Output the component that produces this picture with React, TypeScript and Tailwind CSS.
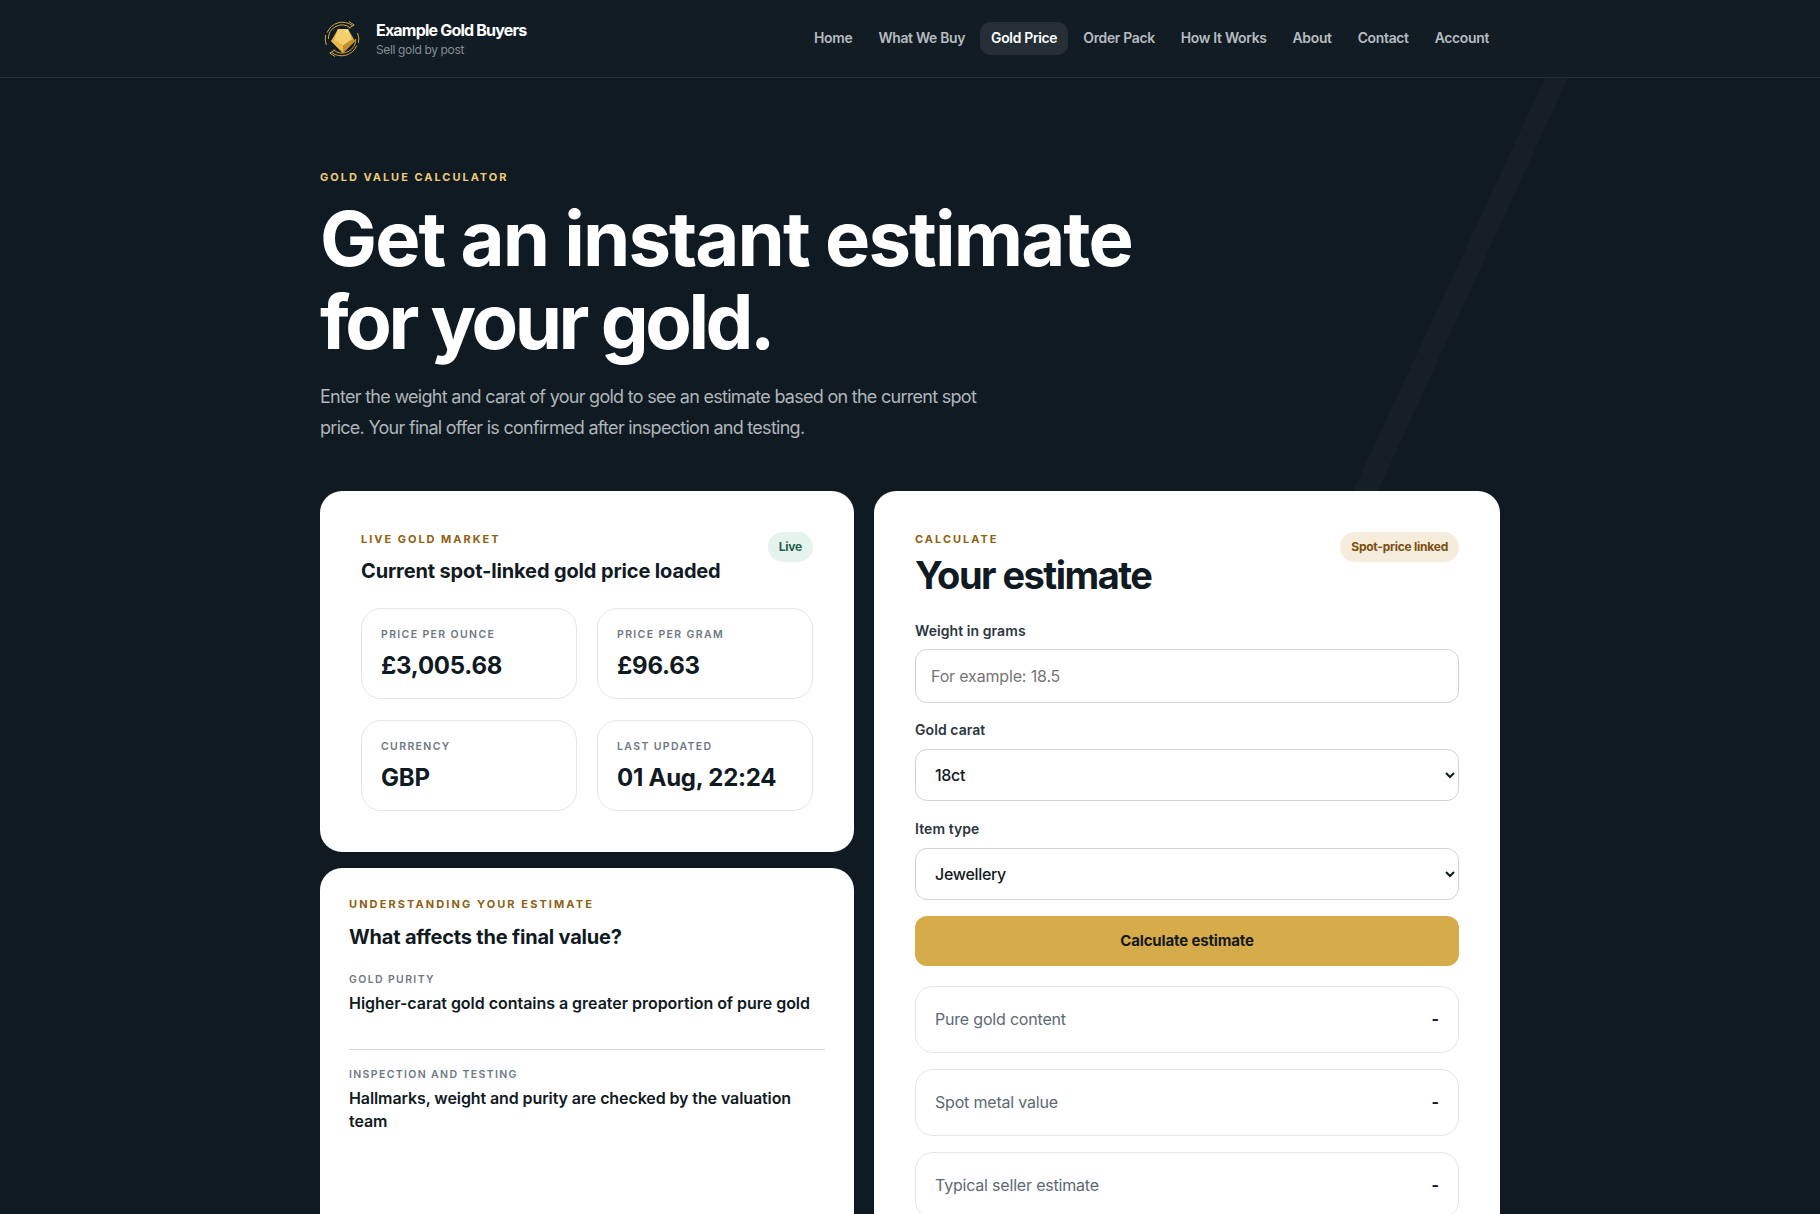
import { Fragment } from "react";

const navLinks = ["Home", "What We Buy", "Gold Price", "Order Pack", "How It Works", "About", "Contact", "Account"];

const marketTiles = [
  { label: "PRICE PER OUNCE", value: "£3,005.68" },
  { label: "PRICE PER GRAM", value: "£96.63" },
  { label: "CURRENCY", value: "GBP" },
  { label: "LAST UPDATED", value: "01 Aug, 22:24" },
];

const results = ["Pure gold content", "Spot metal value", "Typical seller estimate"];

const Logo = () => (
  <svg width="40" height="40" viewBox="0 0 40 40" fill="none" className="shrink-0">
    <path d="M5.2 13.5A16.5 16.5 0 0 1 30.5 6.6" stroke="#d3a63f" strokeWidth="1" />
    <path d="M34.8 26.5A16.5 16.5 0 0 1 9.5 33.4" stroke="#d3a63f" strokeWidth="1" />
    <path d="M35.6 14A17 17 0 0 1 36.4 24" stroke="#d3a63f" strokeWidth="1" />
    <path d="M4.4 26A17 17 0 0 1 3.6 16" stroke="#d3a63f" strokeWidth="1" />
    <path d="M6.4 20A13.6 13.6 0 0 1 28.5 9" stroke="#d3a63f" strokeWidth="1" />
    <path d="M33.6 20A13.6 13.6 0 0 1 11.5 31" stroke="#d3a63f" strokeWidth="1" />
    <path d="M27 2.5 32.2 6 26.8 9.2" stroke="#d3a63f" strokeWidth="1" />
    <path d="M13 37.5 7.8 34 13.2 30.8" stroke="#d3a63f" strokeWidth="1" />
    <path d="M16 10 26 10 33 22 21 34 9 22Z" fill="#d9a63c" />
    <path d="M16 10 26 10 30 20.5 21 26.5 12 20.5Z" fill="#f2cf6a" />
    <path d="M9 22 12 20.5 21 26.5 21 34Z" fill="#e8b94a" />
    <path d="M33 22 30 20.5 21 26.5 21 34Z" fill="#c28f2d" />
    <circle cx="24.5" cy="12.5" r="1" fill="#fff8dc" />
  </svg>
);

const Header = () => (
  <header className="h-[78px] border-b border-[#252f38] bg-[#111c24]">
    <div className="mx-auto flex h-full w-[1180px] items-center justify-between">
      <div className="flex items-center gap-3.5 pl-[2px]">
        <Logo />
        <div className="-mt-px">
          <div className="text-base leading-[22px] font-bold tracking-[-0.05em] text-white">Example Gold Buyers</div>
          <div className="mt-px text-xs leading-[16px] tracking-[-0.03em] text-[#858d94]">Sell gold by post</div>
        </div>
      </div>
      <nav className="flex items-center gap-1">
        {navLinks.map((link) => (
          <a
            key={link}
            className={
              link === "Gold Price"
                ? "rounded-[10px] bg-[#262f38] px-[11px] py-[7px] text-[13.9px] leading-[19px] font-semibold tracking-[-0.022em] text-white"
                : "rounded-[10px] px-[11px] py-[7px] text-[13.9px] leading-[19px] font-semibold tracking-[-0.022em] text-[#b8bcc0]"
            }
          >
            {link}
          </a>
        ))}
      </nav>
    </div>
  </header>
);

const Badge = ({ label, className }: { label: string; className: string }) => (
  <span className={`flex h-[30px] items-center rounded-full px-[11px] text-xs font-bold tracking-[-0.02em] ${className}`}>
    {label}
  </span>
);

const MarketCard = () => (
  <section className="rounded-[22px] bg-white p-[41px]">
    <div className="flex items-start justify-between">
      <div>
        <div className="text-[11px] leading-[14px] font-bold tracking-[0.18em] text-[#8f5f12]">LIVE GOLD MARKET</div>
        <h2 className="mt-[12px] text-xl leading-[26px] font-bold tracking-[-0.007em] text-[#101a22]">
          Current spot-linked gold price loaded
        </h2>
      </div>
      <Badge label="Live" className="bg-[#e6f3ec] text-[#24614a]" />
    </div>
    <div className="mt-[24px] grid grid-cols-2 gap-x-5 gap-y-[21px]">
      {marketTiles.map((tile) => (
        <div key={tile.label} className="h-[91px] rounded-[20px] border border-[#e3e6e9] px-[19px] pt-[18px]">
          <div className="text-[10.5px] leading-[16px] font-semibold tracking-[0.13em] text-[#6d7882]">{tile.label}</div>
          <div className="mt-[7px] text-2xl leading-[32px] font-bold tracking-[-0.01em] text-[#101a22]">{tile.value}</div>
        </div>
      ))}
    </div>
  </section>
);

const FactorsCard = () => (
  <section className="flex-1 rounded-[22px] bg-white px-[29px] pt-[28px]">
    <div className="text-[11px] leading-[16px] font-bold tracking-[0.19em] text-[#8f5f12]">UNDERSTANDING YOUR ESTIMATE</div>
    <h2 className="mt-[12px] text-xl leading-[26px] font-bold tracking-[-0.01em] text-[#101a22]">What affects the final value?</h2>
    <div className="mt-[22px] border-b border-[#d5d8db] pb-[34px]">
      <div className="text-[10.5px] leading-[16px] font-semibold tracking-[0.13em] text-[#6d7882]">GOLD PURITY</div>
      <p className="mt-[4px] text-base leading-[23px] font-semibold tracking-[-0.002em] text-[#101a22]">
        Higher-carat gold contains a greater proportion of pure gold
      </p>
    </div>
    <div className="mt-[17px]">
      <div className="text-[10.5px] leading-[16px] font-semibold tracking-[0.13em] text-[#6d7882]">INSPECTION AND TESTING</div>
      <p className="mt-[4px] text-base leading-[23px] font-semibold tracking-[-0.006em] text-[#101a22]">
        Hallmarks, weight and purity are checked by the valuation team
      </p>
    </div>
  </section>
);

const Field = ({ label, children }: { label: string; children: React.ReactNode }) => (
  <Fragment>
    <label className="block text-sm leading-[20px] font-semibold tracking-[0.005em] text-[#2b3640]">{label}</label>
    {children}
  </Fragment>
);

const EstimateCard = () => (
  <section className="rounded-[22px] bg-white px-[41px] pt-[41px] pb-[40px]">
    <div className="flex items-start justify-between">
      <div>
        <div className="text-[11px] leading-[14px] font-bold tracking-[0.18em] text-[#8f5f12]">CALCULATE</div>
        <h2 className="mt-[7px] text-[38px] leading-[44px] font-bold tracking-[-0.04em] text-[#101a22]">Your estimate</h2>
      </div>
      <Badge label="Spot-price linked" className="bg-[#f5ecdc] text-[#7a4f10]" />
    </div>
    <div className="mt-[24px]">
      <Field label="Weight in grams">
        <input
          type="text"
          placeholder="For example: 18.5"
          className="mt-[8px] block h-[54px] w-full rounded-xl border border-[#cdd3d8] bg-white px-[15px] text-base tracking-[-0.01em] text-[#101a22] placeholder:text-[#757575]"
        />
      </Field>
      <div className="mt-[17px]">
        <Field label="Gold carat">
          <select className="mt-[9px] block h-[52px] w-full rounded-xl border border-[#cdd3d8] bg-white px-[15px] text-base font-medium tracking-[-0.02em] text-[#101a22]">
            <option>18ct</option>
          </select>
        </Field>
      </div>
      <div className="mt-[18px]">
        <Field label="Item type">
          <select className="mt-[9px] block h-[52px] w-full rounded-xl border border-[#cdd3d8] bg-white px-[15px] text-base font-medium tracking-[-0.02em] text-[#101a22]">
            <option>Jewellery</option>
          </select>
        </Field>
      </div>
      <button className="mt-[16px] h-[50px] w-full rounded-xl bg-[#d6ac4a] text-[15px] font-bold tracking-[-0.01em] text-[#15191d]">
        Calculate estimate
      </button>
    </div>
    <div className="mt-[20px] flex flex-col gap-4">
      {results.map((row) => (
        <div key={row} className="flex h-[67px] items-center justify-between rounded-[18px] border border-[#e3e6e9] px-[19px]">
          <span className="-mt-px text-base tracking-[-0.012em] text-[#5d6973]">{row}</span>
          <span className="-mt-px font-bold text-[#101a22]">-</span>
        </div>
      ))}
    </div>
  </section>
);

const App = () => (
  <div className="relative h-[1214px] overflow-hidden bg-[#0f1a22] [font-family:Inter,'Liberation_Sans',sans-serif]">
    <Header />
    <svg className="absolute top-[78px] left-0 h-[600px] w-[1820px]" viewBox="0 0 1820 600" fill="none">
      <polygon points="1545,0 1568,0 1378,413 1353,413" fill="#161f28" />
    </svg>
    <main className="relative mx-auto w-[1180px]">
      <div className="pt-[91px]">
        <div className="text-[11px] leading-[16px] font-bold tracking-[0.18em] text-[#eccb78]">GOLD VALUE CALCULATOR</div>
        <h1 className="mt-[12px] text-[76px] leading-[83px] font-bold text-white">
          <span className="block tracking-[-0.025em]">Get an instant estimate</span>
          <span className="block tracking-[-0.045em]">for your gold.</span>
        </h1>
        <p className="mt-[18px] w-[680px] text-lg leading-[31px] tracking-[-0.04em] text-[#b0b5b9]">
          Enter the weight and carat of your gold to see an estimate based on the current spot price. Your final offer
          is confirmed after inspection and testing.
        </p>
      </div>
      <div className="mt-[48px] grid grid-cols-[534px_626px] gap-5">
        <div className="flex flex-col gap-4">
          <MarketCard />
          <FactorsCard />
        </div>
        <EstimateCard />
      </div>
    </main>
  </div>
);

export default App;
